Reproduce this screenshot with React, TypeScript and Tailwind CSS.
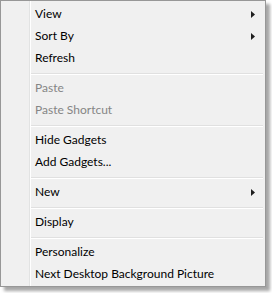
type Entry = { label: string; disabled?: boolean; sub?: boolean } | "sep";

const entries: Entry[] = [
  { label: "View", sub: true },
  { label: "Sort By", sub: true },
  { label: "Refresh" },
  "sep",
  { label: "Paste", disabled: true },
  { label: "Paste Shortcut", disabled: true },
  "sep",
  { label: "Hide Gadgets" },
  { label: "Add Gadgets..." },
  "sep",
  { label: "New", sub: true },
  "sep",
  { label: "Display" },
  "sep",
  { label: "Personalize" },
  { label: "Next Desktop Background Picture" },
];

const Arrow = () => (
  <svg width="4" height="7" viewBox="0 0 4 7" className="block">
    <path d="M0 0 L4 3.5 L0 7 Z" fill="#1e1e1e" />
  </svg>
);

export default function App() {
  return (
    <div className="h-[293px] w-[272px] bg-white">
      <div
        className="w-[266px] h-[287px] border border-[#979797] bg-[#f0f0f0] pt-[2px] pb-[1px] shadow-[4px_4px_3px_rgba(0,0,0,0.35)] bg-[linear-gradient(to_right,transparent_28px,#e2e3e3_28px,#e2e3e3_29px,#ffffff_29px,#ffffff_30px,transparent_30px)]"
        style={{ fontFamily: 'Lato, "Liberation Sans", sans-serif' }}
      >
        {entries.map((e, i) =>
          e === "sep" ? (
            <div key={i} className="h-[8px] ml-[30px] mr-[2px] pt-[4px]">
              <div className="h-px bg-[#e0e0e0]" />
              <div className="h-px bg-white" />
            </div>
          ) : (
            <div
              key={i}
              className={
                "flex h-[22px] items-center justify-between pl-[34px] pr-[10px] text-[12px] " +
                (e.disabled ? "text-[#858585]" : "text-black")
              }
            >
              <span>{e.label}</span>
              {e.sub && <Arrow />}
            </div>
          )
        )}
      </div>
    </div>
  );
}
